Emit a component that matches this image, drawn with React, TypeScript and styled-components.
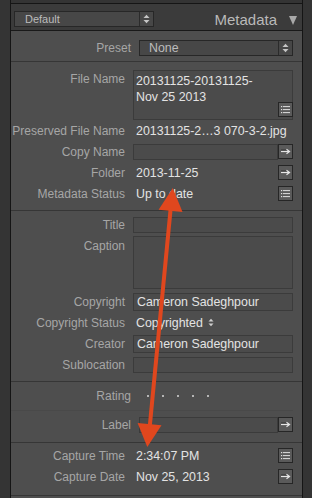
import React from "react";
import styled, { createGlobalStyle } from "styled-components";

const GlobalStyle = createGlobalStyle`
  html, body {
    margin: 0;
    padding: 0;
    background: #343434;
  }
  body {
    font-family: "Liberation Sans", Arial, sans-serif;
  }
`;

const Frame = styled.div`
  position: relative;
  width: 312px;
  height: 498px;
  overflow: hidden;
  display: flex;
  background: #343434;
`;

const Gutter = styled.div<{ $w: number }>`
  width: ${(p) => p.$w}px;
  flex: none;
`;

const Panel = styled.div`
  width: 291px;
  flex: none;
  display: flex;
  flex-direction: column;
  border-left: 1px solid #151515;
  border-right: 1px solid #151515;
  background: #4e4e4e;
`;

const TopStrip = styled.div`
  height: 3px;
  background: #343434;
  border-bottom: 1px solid #151515;
`;

const Header = styled.div`
  height: 27px;
  box-sizing: border-box;
  display: flex;
  align-items: flex-start;
  padding: 7px 5px 0 3px;
  background: #3b3b3b;
  border-bottom: 1px solid #191919;
`;

const PanelTitle = styled.span`
  margin-left: auto;
  font-size: 15px;
  line-height: 17px;
  color: #b9b9b9;
`;

const Collapse = styled.svg`
  margin: 5px 0 0 12px;
`;

const Select = styled.div<{ $w?: number }>`
  display: flex;
  width: ${(p) => (p.$w ? `${p.$w}px` : "auto")};
  flex: ${(p) => (p.$w ? "none" : "1")};
  height: 16px;
  box-sizing: border-box;
  border: 1px solid #272727;
  background: #474747;
`;

const SelectText = styled.span<{ $size: number; $pad: number }>`
  flex: 1;
  padding-left: ${(p) => p.$pad}px;
  font-size: ${(p) => p.$size}px;
  line-height: 14px;
  color: #bcbcbc;
`;

const SelectArrows = styled.span`
  width: 13px;
  display: flex;
  align-items: center;
  justify-content: center;
  border-left: 1px solid #2b2b2b;
`;

const Section = styled.section<{ $pt: number; $pb: number }>`
  display: flex;
  flex-direction: column;
  padding: ${(p) => p.$pt}px 9px ${(p) => p.$pb}px 0;
  border-bottom: 1px solid #363636;
`;

const Row = styled.div<{ $label: number; $h?: number; $top?: boolean }>`
  display: grid;
  grid-template-columns: ${(p) => p.$label}px 1fr;
  column-gap: 8px;
  height: ${(p) => p.$h ?? 21}px;
  align-items: ${(p) => (p.$top ? "start" : "center")};
`;

const Label = styled.div<{ $mt?: number }>`
  margin-top: ${(p) => p.$mt ?? 0}px;
  text-align: right;
  font-size: 12px;
  line-height: 16px;
  color: #a6a6a6;
  white-space: nowrap;
`;

const Cell = styled.div<{ $mt?: number }>`
  display: flex;
  align-items: center;
  min-width: 0;
  margin-top: ${(p) => p.$mt ?? 0}px;
`;

const Value = styled.span`
  flex: 1;
  padding-left: 3px;
  font-size: 12.4px;
  line-height: 16px;
  color: #e3e3e3;
  white-space: nowrap;
  overflow: hidden;
`;

const InlineValue = styled(Value)`
  flex: none;
  margin-right: 5px;
`;

const Field = styled.div<{ $h: number }>`
  flex: 1;
  height: ${(p) => p.$h}px;
  box-sizing: border-box;
  border: 1px solid #3b3b3b;
  background: #4b4b4b;
  padding-left: 3px;
  font-size: 12.4px;
  line-height: ${(p) => p.$h - 2}px;
  color: #e3e3e3;
  white-space: nowrap;
`;

const TextArea = styled.div<{ $h: number }>`
  flex: 1;
  display: flex;
  height: ${(p) => p.$h}px;
  box-sizing: border-box;
  border: 1px solid #3b3b3b;
  background: #4b4b4b;
`;

const AreaText = styled.div`
  flex: 1;
  padding: 2px 0 0 2px;
  font-size: 12.4px;
  line-height: 16px;
  color: #e3e3e3;
`;

const AreaButton = styled.div`
  align-self: flex-end;
  margin: 0 -1px 2px 0;
`;

const IconBtn = styled.span`
  width: 15px;
  height: 15px;
  flex: none;
  box-sizing: border-box;
  display: flex;
  align-items: center;
  justify-content: center;
  border: 1px solid #262626;
  background: #5a5a5a;
`;

const Divider = styled.div`
  height: 1px;
  margin: 4px 0 3px;
  background: #494949;
`;

const Dots = styled.div`
  display: flex;
  gap: 13px;
  padding-left: 8px;
`;

const Dot = styled.span`
  width: 2px;
  height: 2px;
  border-radius: 1px;
  background: #d8d8d8;
`;

const Overlay = styled.svg`
  position: absolute;
  inset: 0;
  pointer-events: none;
`;

const Stepper = ({ color = "#c6c6c6", small }: { color?: string; small?: boolean }) =>
  small ? (
    <svg width="6" height="9" viewBox="0 0 6 9">
      <polygon points="0.5,3.5 3,0.8 5.5,3.5" fill={color} />
      <polygon points="0.5,5.5 3,8.2 5.5,5.5" fill={color} />
    </svg>
  ) : (
    <svg width="7" height="10" viewBox="0 0 7 10">
      <polygon points="0.5,4 3.5,0.8 6.5,4" fill={color} />
      <polygon points="0.5,6 3.5,9.2 6.5,6" fill={color} />
    </svg>
  );

const ListIcon = () => (
  <svg width="13" height="13" viewBox="0 0 13 13">
    {[3.5, 6.5, 9.5].map((y) => (
      <g key={y}>
        <rect x="2" y={y - 0.5} width="1.2" height="1.2" fill="#dedede" />
        <line x1="4" y1={y + 0.1} x2="11" y2={y + 0.1} stroke="#dedede" strokeWidth="1" />
      </g>
    ))}
  </svg>
);

const ArrowIcon = () => (
  <svg width="13" height="13" viewBox="0 0 13 13">
    <line x1="2" y1="5" x2="9" y2="5" stroke="#333" strokeWidth="1" />
    <line x1="2" y1="6.5" x2="10" y2="6.5" stroke="#e6e6e6" strokeWidth="1.2" />
    <polyline points="7.5,4.3 10.5,6.5 7.5,8.7" fill="none" stroke="#e6e6e6" strokeWidth="1.2" />
  </svg>
);

const ListButton = () => (
  <IconBtn>
    <ListIcon />
  </IconBtn>
);

const ArrowButton = () => (
  <IconBtn>
    <ArrowIcon />
  </IconBtn>
);

export default function App() {
  return (
    <>
      <GlobalStyle />
      <Frame>
        <Gutter $w={10} />
        <Panel>
          <TopStrip />
          <Header>
            <Select $w={140}>
              <SelectText $size={11} $pad={10}>Default</SelectText>
              <SelectArrows>
                <Stepper />
              </SelectArrows>
            </Select>
            <PanelTitle>Metadata</PanelTitle>
            <Collapse width="8" height="9" viewBox="0 0 8 9">
              <polygon points="0,0 8,0 4,9" fill="#a8a8a8" />
            </Collapse>
          </Header>

          <Section $pt={6} $pb={3}>
            <Row $label={120}>
              <Label>Preset</Label>
              <Cell>
                <Select>
                  <SelectText $size={12.4} $pad={9}>None</SelectText>
                  <SelectArrows>
                    <Stepper />
                  </SelectArrows>
                </Select>
              </Cell>
            </Row>
          </Section>

          <Section $pt={8} $pb={6}>
            <Row $label={114} $h={50} $top>
              <Label $mt={1}>File Name</Label>
              <TextArea $h={50}>
                <AreaText>
                  20131125-20131125-
                  <br />
                  Nov 25 2013
                </AreaText>
                <AreaButton>
                  <ListButton />
                </AreaButton>
              </TextArea>
            </Row>
            <Row $label={114}>
              <Label>Preserved File Name</Label>
              <Cell>
                <Value>20131125-2…3 070-3-2.jpg</Value>
              </Cell>
            </Row>
            <Row $label={114}>
              <Label>Copy Name</Label>
              <Cell>
                <Field $h={16} />
                <ArrowButton />
              </Cell>
            </Row>
            <Row $label={114}>
              <Label>Folder</Label>
              <Cell>
                <Value>2013-11-25</Value>
                <ArrowButton />
              </Cell>
            </Row>
            <Row $label={114}>
              <Label>Metadata Status</Label>
              <Cell>
                <Value>Up to date</Value>
                <ListButton />
              </Cell>
            </Row>
          </Section>

          <Section $pt={3} $pb={6}>
            <Row $label={114}>
              <Label>Title</Label>
              <Cell>
                <Field $h={16} />
              </Cell>
            </Row>
            <Row $label={114} $h={56} $top>
              <Label $mt={3}>Caption</Label>
              <Cell $mt={1}>
                <Field $h={53} />
              </Cell>
            </Row>
            <Row $label={114}>
              <Label>Copyright</Label>
              <Cell>
                <Field $h={18}>Cameron Sadeghpour</Field>
              </Cell>
            </Row>
            <Row $label={114}>
              <Label>Copyright Status</Label>
              <Cell>
                <InlineValue>Copyrighted</InlineValue>
                <Stepper color="#cfcfcf" small />
              </Cell>
            </Row>
            <Row $label={114}>
              <Label>Creator</Label>
              <Cell>
                <Field $h={18}>Cameron Sadeghpour</Field>
              </Cell>
            </Row>
            <Row $label={114}>
              <Label>Sublocation</Label>
              <Cell>
                <Field $h={16} />
              </Cell>
            </Row>
          </Section>

          <Section $pt={3} $pb={7}>
            <Row $label={120}>
              <Label>Rating</Label>
              <Dots>
                {[0, 1, 2, 3, 4].map((i) => (
                  <Dot key={i} />
                ))}
              </Dots>
            </Row>
            <Divider />
            <Row $label={120}>
              <Label>Label</Label>
              <Cell>
                <Field $h={16} />
                <ArrowButton />
              </Cell>
            </Row>
          </Section>

          <Section $pt={2} $pb={8}>
            <Row $label={114}>
              <Label>Capture Time</Label>
              <Cell>
                <Value>2:34:07 PM</Value>
                <ListButton />
              </Cell>
            </Row>
            <Row $label={114}>
              <Label>Capture Date</Label>
              <Cell>
                <Value>Nov 25, 2013</Value>
                <ArrowButton />
              </Cell>
            </Row>
          </Section>
        </Panel>
        <Gutter $w={9} />

        <Overlay width="312" height="498" viewBox="0 0 312 498">
          <line x1="171" y1="205" x2="149.6" y2="428" stroke="#e0471e" strokeWidth="4" />
          <polygon points="172.8,188 182.5,212.1 158.6,209.7" fill="#e0471e" />
          <polygon points="147.3,447 161.5,425.3 137.6,422.9" fill="#e0471e" />
        </Overlay>
      </Frame>
    </>
  );
}
